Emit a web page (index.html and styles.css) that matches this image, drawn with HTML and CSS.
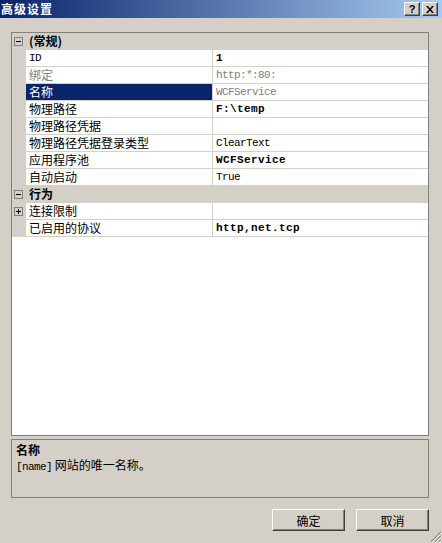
FILE: index.html
```html
<!DOCTYPE html>
<html lang="zh-CN">
<head>
    <meta charset="UTF-8">
    <title>高级设置</title>
    <link rel="stylesheet" href="styles.css">
</head>
<body>
    <div class="titlebar">
        <span class="title">高级设置</span>
        <div class="tbtns">
            <span class="tbtn help">?</span>
            <span class="tbtn">
                <svg width="8" height="7" viewBox="0 0 8 7"><path d="M0 0h2l2 2.5L6 0h2L5 3.5 8 7H6L4 4.5 2 7H0l3-3.5z" fill="#000"/></svg>
            </span>
        </div>
    </div>
    <div class="dialog">
        <div class="grid">
            <div class="row cat">
                <span class="margin"><svg width="9" height="9"><rect x="0.5" y="0.5" width="8" height="8" fill="none" stroke="#808080"/><path d="M2 4.5h5" stroke="#000"/></svg></span>
                <span class="name">(常规)</span>
            </div>
            <div class="row">
                <span class="margin"></span>
                <span class="name mono">ID</span>
                <span class="val mono b">1</span>
            </div>
            <div class="row">
                <span class="margin"></span>
                <span class="name grey">绑定</span>
                <span class="val mono grey">http:*:80:</span>
            </div>
            <div class="row sel">
                <span class="margin"></span>
                <span class="name">名称</span>
                <span class="val mono grey">WCFService</span>
            </div>
            <div class="row">
                <span class="margin"></span>
                <span class="name">物理路径</span>
                <span class="val mono b">F:\temp</span>
            </div>
            <div class="row">
                <span class="margin"></span>
                <span class="name">物理路径凭据</span>
                <span class="val"></span>
            </div>
            <div class="row">
                <span class="margin"></span>
                <span class="name">物理路径凭据登录类型</span>
                <span class="val mono">ClearText</span>
            </div>
            <div class="row">
                <span class="margin"></span>
                <span class="name">应用程序池</span>
                <span class="val mono b">WCFService</span>
            </div>
            <div class="row">
                <span class="margin"></span>
                <span class="name">自动启动</span>
                <span class="val mono">True</span>
            </div>
            <div class="row cat">
                <span class="margin"><svg width="9" height="9"><rect x="0.5" y="0.5" width="8" height="8" fill="none" stroke="#808080"/><path d="M2 4.5h5" stroke="#000"/></svg></span>
                <span class="name">行为</span>
            </div>
            <div class="row">
                <span class="margin"><svg width="9" height="9"><rect x="0.5" y="0.5" width="8" height="8" fill="none" stroke="#808080"/><path d="M2 4.5h5M4.5 2v5" stroke="#000"/></svg></span>
                <span class="name">连接限制</span>
                <span class="val"></span>
            </div>
            <div class="row">
                <span class="margin"></span>
                <span class="name">已启用的协议</span>
                <span class="val mono b">http,net.tcp</span>
            </div>
        </div>
        <div class="desc">
            <div class="desc-title">名称</div>
            <div><span class="mono">[name]</span> 网站的唯一名称。</div>
        </div>
        <div class="buttons">
            <button class="btn">确定</button>
            <button class="btn">取消</button>
        </div>
    </div>
    <svg class="grip" width="12" height="12" viewBox="0 0 12 12">
        <path d="M11 1L1 11M11 5L5 11M11 9L9 11" stroke="#808080" stroke-width="1.2"/>
        <path d="M12 1L1 12M12 5L5 12M12 9L9 12" stroke="#fff" stroke-width="0.8"/>
    </svg>
</body>
</html>
```

FILE: styles.css
```css
body {
    margin: 0;
    width: 442px;
    height: 543px;
    background-color: #d4d0c8;
    font-family: "Noto Sans CJK SC", sans-serif;
    font-size: 12px;
    color: #000;
    position: relative;
    overflow: hidden;
}
.titlebar {
    height: 18px;
    display: flex;
    align-items: center;
    justify-content: space-between;
    padding: 0 4px 0 1px;
    background: linear-gradient(to right, #0a246a, #a6caf0);
}
.title {
    color: white;
    font-weight: bold;
    letter-spacing: 1px;
    line-height: 18px;
}
.tbtns {
    display: flex;
    gap: 2px;
}
.tbtn {
    width: 16px;
    height: 14px;
    box-sizing: border-box;
    display: flex;
    align-items: center;
    justify-content: center;
    background-color: #d4d0c8;
    border: 1px solid;
    border-color: #fff #404040 #404040 #fff;
    box-shadow: inset -1px -1px #808080;
}
.tbtn.help {
    font-family: "Liberation Sans", sans-serif;
    font-weight: bold;
    font-size: 11px;
    line-height: 12px;
}
.dialog {
    padding: 14px 13px 0 11px;
}
.grid {
    height: 404px;
    box-sizing: border-box;
    border: 1px solid #808080;
    background-color: white;
}
.row {
    display: flex;
    height: 16px;
    line-height: 16px;
    border-bottom: 1px solid #d4d0c8;
    white-space: nowrap;
}
.margin {
    width: 14px;
    flex: none;
    display: flex;
    align-items: center;
    padding-left: 2px;
    box-sizing: border-box;
    background-color: #d4d0c8;
}
.name {
    width: 183px;
    padding-left: 3px;
    flex: none;
    border-right: 1px solid #d4d0c8;
}
.val {
    flex: 1;
    padding-left: 3px;
}
.cat {
    background-color: #d4d0c8;
    font-weight: bold;
}
.cat .name {
    border-right: none;
}
.sel .name {
    background-color: #0a246a;
    color: white;
}
.grey {
    color: #808080;
}
.mono {
    font-family: "Liberation Mono", monospace;
    font-size: 11px;
    letter-spacing: -0.6px;
}
.mono.b {
    font-weight: bold;
    letter-spacing: 0.4px;
}
.desc {
    height: 59px;
    box-sizing: border-box;
    margin-top: 3px;
    padding: 2px 4px;
    border: 1px solid #808080;
    line-height: 15px;
}
.desc-title {
    font-weight: bold;
}
.buttons {
    display: flex;
    justify-content: flex-end;
    gap: 11px;
    margin-top: 11px;
}
.btn {
    width: 73px;
    height: 22px;
    box-sizing: border-box;
    padding: 0;
    font-family: "Noto Sans CJK SC", sans-serif;
    font-size: 12px;
    color: #000;
    background-color: #d4d0c8;
    border: 1px solid;
    border-color: #fff #404040 #404040 #fff;
    box-shadow: inset -1px -1px #808080;
}
.grip {
    position: absolute;
    right: 0;
    bottom: 0;
}
```
